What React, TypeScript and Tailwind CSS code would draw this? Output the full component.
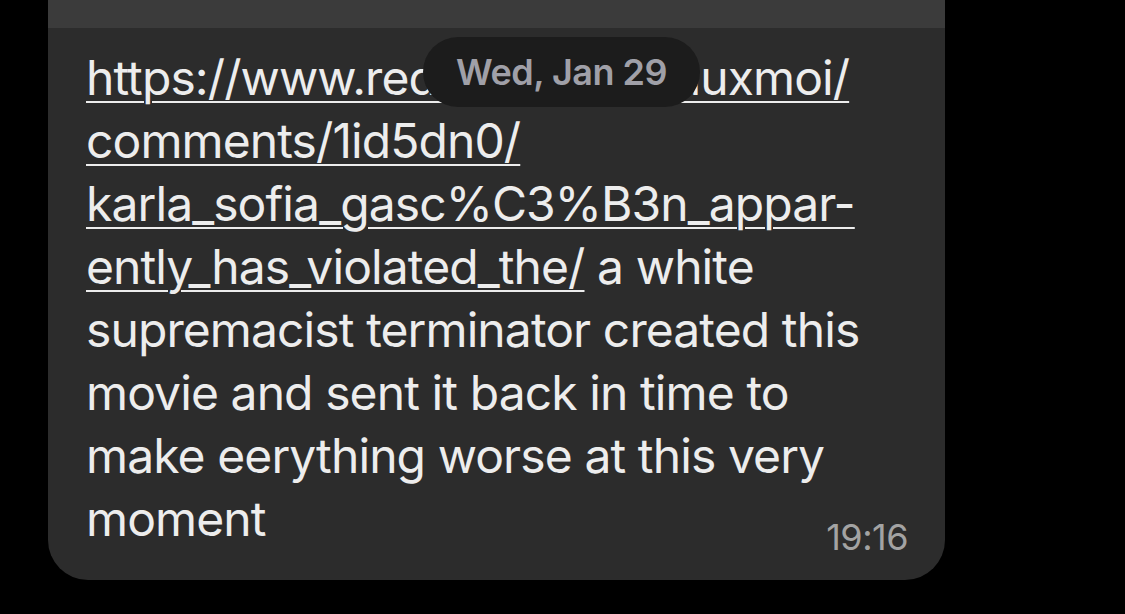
import React from "react";

const lines: { text: string; link?: boolean }[][] = [
  [{ text: "https://www.reddit.com/r/Fauxmoi/", link: true }],
  [{ text: "comments/1id5dn0/", link: true }],
  [{ text: "karla_sofia_gasc%C3%B3n_appar-", link: true }],
  [{ text: "ently_has_violated_the/", link: true }, { text: " a white" }],
  [{ text: "supremacist terminator created this" }],
  [{ text: "movie and sent it back in time to" }],
  [{ text: "make eerything worse at this very" }],
];

export default function App() {
  return (
    <div
      className="w-[1125px] h-[614px] bg-black overflow-hidden"
      style={{ fontFamily: "Inter, 'Noto Sans', sans-serif" }}
    >
      <div className="ml-[48px] w-[897px]">
        {/* tail of previous bubble */}
        <div className="h-[28px] bg-[#3b3b3b]" />

        {/* message bubble */}
        <div className="relative bg-[#2c2c2c] rounded-b-[40px] h-[552px] pl-[38px] pr-[38px] pt-[18px] text-[#ededed] text-[48px] leading-[63px] tracking-[-0.9px]">
          {lines.map((line, i) => (
            <div key={i} className="whitespace-nowrap">
              {line.map((seg, j) =>
                seg.link ? (
                  <span key={j} className="underline decoration-2 underline-offset-[6px]">
                    {seg.text}
                  </span>
                ) : (
                  <span key={j}>{seg.text}</span>
                )
              )}
            </div>
          ))}
          <div className="flex items-end justify-between">
            <span>moment</span>
            <span className="text-[36px] leading-[36px] tracking-[-0.5px] text-[#a3a3a3] mb-[-5px] mr-[-1px]">19:16</span>
          </div>

          {/* date pill */}
          <div className="absolute left-[375px] top-[9px] h-[70px] w-[277px] rounded-full bg-[#1c1c1c] flex items-center justify-center text-[36px] font-semibold text-[#a0a0a8] tracking-[-0.5px]">
            Wed, Jan 29
          </div>
        </div>
      </div>
    </div>
  );
}
